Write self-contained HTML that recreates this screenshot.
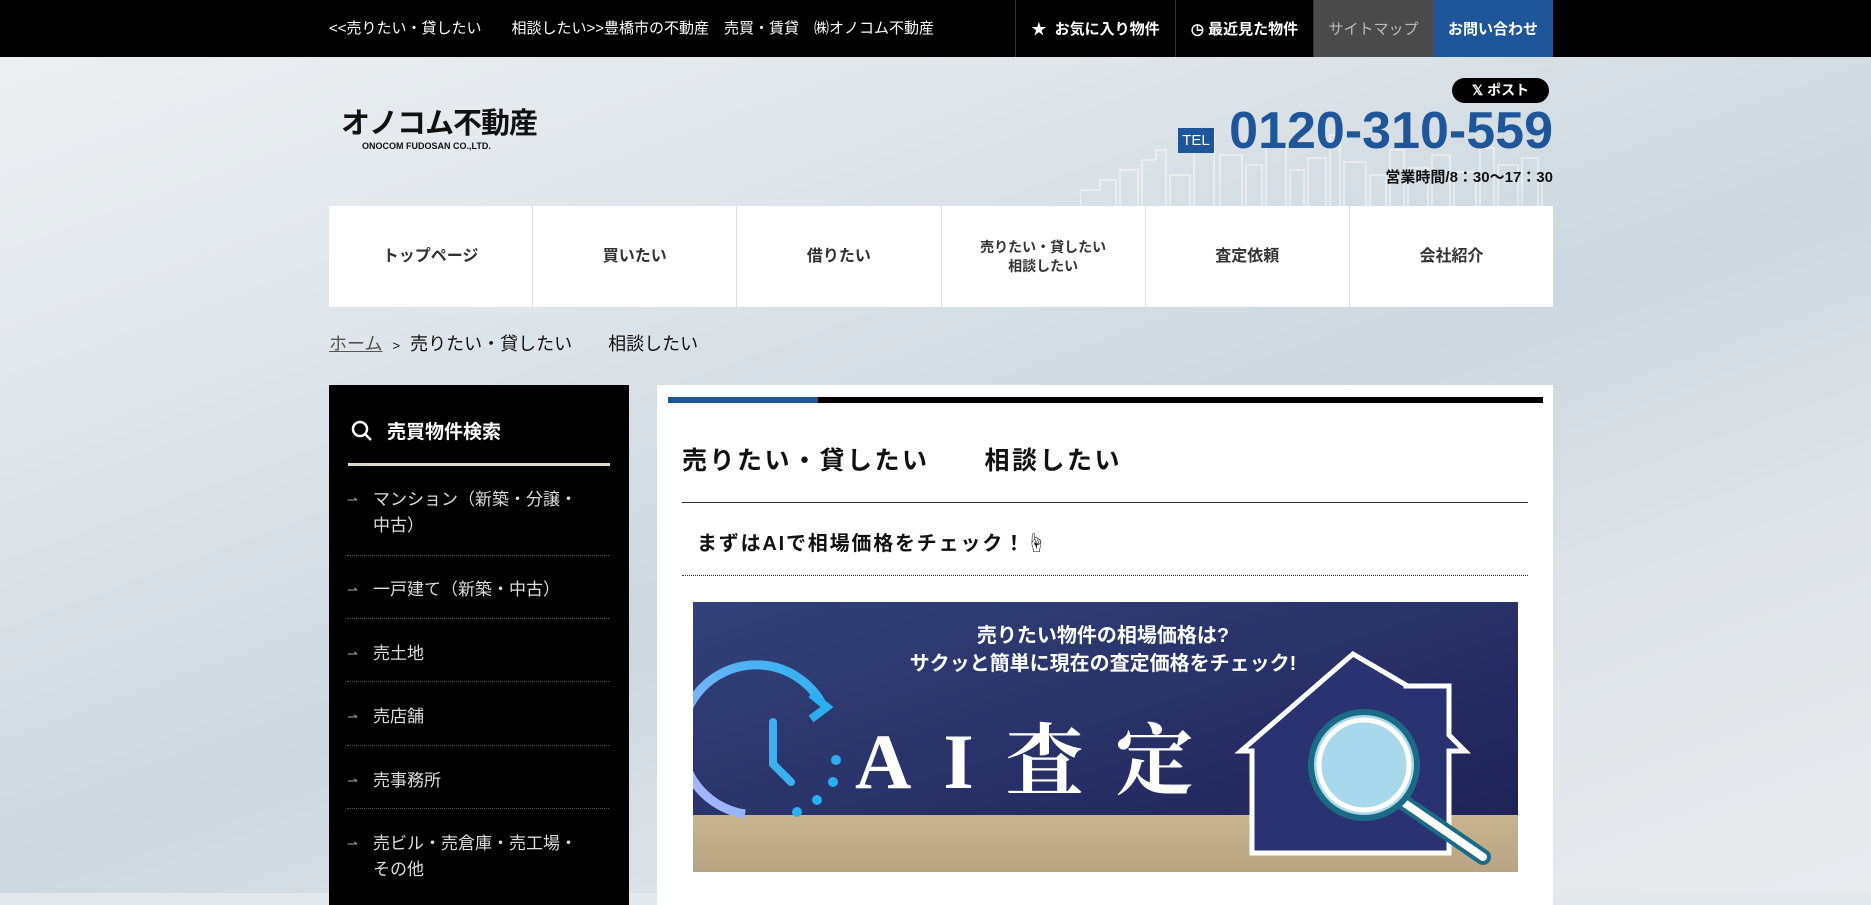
<!DOCTYPE html>
<html style="background:#e3e8ec"><head><meta charset="utf-8"><style>
*{margin:0;padding:0;box-sizing:border-box}
body{width:1871px;height:893px;overflow:hidden;font-family:"Liberation Sans","Noto Sans CJK JP",sans-serif;background:linear-gradient(160deg,#eef1f3 0%,#dfe5ea 30%,#ccd7df 55%,#dfe4e8 75%,#e8ebee 100%);position:relative;color:#111}
.a{position:absolute}
.top{left:0;top:0;width:1871px;height:57px;background:#000}
.top .t{left:329px;top:17px;color:#fff;font-size:15px}
.tb{top:0;height:57px;display:flex;align-items:center;justify-content:center;color:#fff;font-size:15px;font-weight:bold;border-left:1px solid #333}
.nav{left:329px;top:206px;width:1224px;height:101px;background:#fff;display:flex}
.nav div{flex:1;display:flex;align-items:center;justify-content:center;text-align:center;font-size:16px;font-weight:bold;color:#333;border-right:1px solid #ddd;line-height:1.35}
.nav div:last-child{border:none}
.side{left:329px;top:385px;width:300px;height:520px;background:#000;color:#fff}
.si{left:18px;width:262px;font-size:17px;color:#ddd;padding-left:26px;line-height:26px}
.si:before{content:"⇀";position:absolute;left:0;color:#aaa;font-size:13px}
.sep{left:18px;width:262px;border-top:1px dotted #555}
.main{left:657px;top:385px;width:896px;height:520px;background:#fff}
</style></head><body>
<div class="a top">
<div class="a t">&lt;&lt;売りたい・貸したい　　相談したい&gt;&gt;豊橋市の不動産　売買・賃貸　㈱オノコム不動産</div>
<div class="a tb" style="left:1015px;width:160px">★&nbsp; お気に入り物件</div>
<div class="a tb" style="left:1175px;width:138px">◷ 最近見た物件</div>
<div class="a tb" style="left:1313px;width:120px;background:#4a4a4a;color:#bbb;font-weight:normal">サイトマップ</div>
<div class="a tb" style="left:1433px;width:120px;background:#1f5599;border:none">お問い合わせ</div>
</div>
<div class="a" style="left:341px;top:100px;font-size:29px;font-weight:bold;letter-spacing:-1px">オノコム不動産</div>
<div class="a" style="left:362px;top:141px;font-size:9px;font-weight:bold">ONOCOM FUDOSAN CO.,LTD.</div>
<svg class="a" style="left:1080px;top:120px" width="473" height="86"><g stroke="#fff" fill="none" stroke-width="1" opacity=".85">
<path d="M0 86V70h20V60h16v26M40 86V50h18v36M62 86V40h14V30h10v56M90 86V55h20v31M114 86V20h12V10h8v76M140 86V35h22v51M166 86V45h16v41M186 86V25h20v61M210 86V50h14v36M228 86V38h18v48M250 86V15h10v71M264 86V42h22v44M290 86V55h16v31M310 86V30h14v56M328 86V48h20v38M352 86V35h18v51M374 86V52h22v34M400 86V28h14v58M418 86V45h20v41M442 86V38h16v48M462 86V55h11"/></g></svg>
<div class="a" style="left:1452px;top:78px;width:97px;height:25px;border-radius:13px;background:#000;color:#fff;font-size:14px;font-weight:bold;text-align:center;line-height:25px">𝕏 ポスト</div>
<div class="a" style="left:1178px;top:128px;width:36px;height:25px;background:#1f5599;color:#fff;font-size:15px;text-align:center;line-height:25px">TEL</div>
<div class="a" style="right:318px;top:101px;font-size:52px;font-weight:bold;color:#1f5599;white-space:nowrap">0120-310-559</div>
<div class="a" style="right:318px;top:166px;font-size:15px;font-weight:bold;white-space:nowrap">営業時間/8：30〜17：30</div>
<div class="a nav"><div>トップページ</div><div>買いたい</div><div>借りたい</div><div style="font-size:14px">売りたい・貸したい<br>相談したい</div><div>査定依頼</div><div>会社紹介</div></div>
<div class="a" style="left:329px;top:330px;font-size:18px"><span style="text-decoration:underline;color:#555">ホーム</span>&nbsp;&nbsp;<span style="font-size:13px">&gt;</span>&nbsp;&nbsp;売りたい・貸したい　　相談したい</div>
<div class="a side">
<svg class="a" style="left:22px;top:35px" width="22" height="22"><circle cx="9" cy="9" r="7" fill="none" stroke="#fff" stroke-width="2.5"/><path d="M14 14l6 6" stroke="#fff" stroke-width="2.5"/></svg>
<div class="a" style="left:58px;top:32px;font-size:19px;font-weight:bold">売買物件検索</div>
<div class="a" style="left:19px;top:78px;width:262px;height:3px;background:#ddd9cc"></div>
<div class="a si" style="top:102px">マンション（新築・分譲・<br>中古）</div>
<div class="a sep" style="top:170px"></div>
<div class="a si" style="top:192px">一戸建て（新築・中古）</div>
<div class="a sep" style="top:296px"></div><div class="a sep" style="top:233px"></div>
<div class="a si" style="top:256px">売土地</div>
<div class="a si" style="top:319px">売店舗</div>
<div class="a sep" style="top:360px"></div>
<div class="a si" style="top:383px">売事務所</div>
<div class="a sep" style="top:423px"></div>
<div class="a si" style="top:446px">売ビル・売倉庫・売工場・<br>その他</div>
</div>
<div class="a main">
<div class="a" style="left:11px;top:12px;width:875px;height:6px;background:#000"></div>
<div class="a" style="left:11px;top:12px;width:150px;height:6px;background:#1f5599"></div>
<div class="a" style="left:25px;top:56px;font-size:25px;font-weight:bold;letter-spacing:2.5px">売りたい・貸したい　　相談したい</div>
<div class="a" style="left:25px;top:117px;width:846px;height:1px;background:#333"></div>
<div class="a" style="left:40px;top:142px;font-size:20px;font-weight:bold;letter-spacing:1.8px">まずはAIで相場価格をチェック！☝</div>
<div class="a" style="left:25px;top:190px;width:846px;border-top:1px dotted #333"></div>
<svg class="a" style="left:36px;top:217px" width="825" height="270" viewBox="0 0 825 270">
<defs><linearGradient id="bg" x1="0" y1="0" x2="1" y2="1"><stop offset="0" stop-color="#33427a"/><stop offset="1" stop-color="#1d1f55"/></linearGradient>
<linearGradient id="wd" x1="0" y1="0" x2="0" y2="1"><stop offset="0" stop-color="#c9b48f"/><stop offset="1" stop-color="#b8a483"/></linearGradient>
<linearGradient id="ck" x1="0" y1="1" x2="1" y2="0"><stop offset="0" stop-color="#b5b8ff"/><stop offset="1" stop-color="#2ab0f0"/></linearGradient></defs>
<rect width="825" height="270" fill="url(#bg)"/>
<rect y="213" width="825" height="57" fill="url(#wd)"/>
<g font-family="Liberation Sans,Noto Sans CJK JP,sans-serif" font-weight="bold" fill="#fff" font-size="20" text-anchor="middle"><text x="410" y="40">売りたい物件の相場価格は?</text><text x="410" y="68">サクッと簡単に現在の査定価格をチェック!</text></g>
<text x="162" y="186" font-family="Liberation Serif,Noto Serif CJK SC,serif" font-weight="bold" font-size="78" fill="#fff" letter-spacing="32">AI査定</text>
<path d="M128 100A75 75 0 1 0 52 212" fill="none" stroke="url(#ck)" stroke-width="9"/>
<path d="M118 92l16 13-16 12" fill="none" stroke="#2ab0f0" stroke-width="8"/>
<path d="M80 120v42l18 18" fill="none" stroke="#3ab0ef" stroke-width="8" stroke-linecap="round"/>
<g fill="#2ab0f0"><circle cx="143" cy="158" r="5"/><circle cx="140" cy="180" r="5"/><circle cx="124" cy="198" r="5"/><circle cx="104" cy="210" r="5"/></g>
<path d="M660 52L548 149h11v102h197V149h16l-16-16V84h-43v-1z" fill="#2b3272" stroke="#fff" stroke-width="5"/>
<line x1="710" y1="200" x2="790" y2="255" stroke="#1c6b86" stroke-width="16" stroke-linecap="round"/>
<line x1="710" y1="200" x2="790" y2="255" stroke="#fff" stroke-width="8" stroke-linecap="round"/>
<circle cx="671" cy="163" r="53" fill="#a7d8ec" stroke="#1c6b86" stroke-width="6"/>
<circle cx="671" cy="163" r="45" fill="none" stroke="#fff" stroke-width="5"/>
</svg>
</div>
</body></html>
